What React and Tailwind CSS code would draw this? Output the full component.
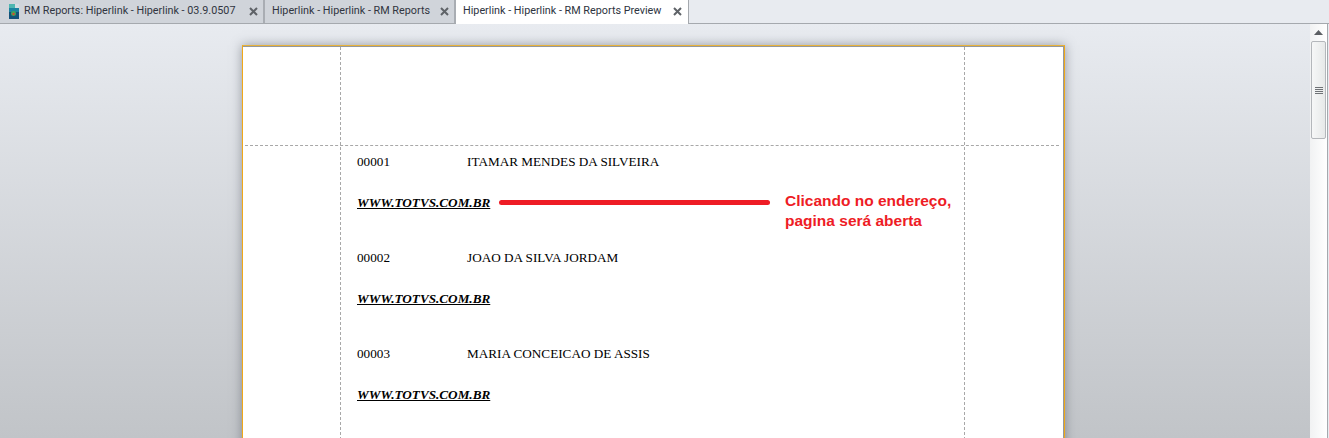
const SERIF = "font-['Liberation_Serif',serif]";

const RECORDS = [
  { code: "00001", name: "ITAMAR MENDES DA SILVEIRA" },
  { code: "00002", name: "JOAO DA SILVA JORDAM" },
  { code: "00003", name: "MARIA CONCEICAO DE ASSIS" },
];

function CloseIcon() {
  return (
    <svg width="9" height="9" viewBox="0 0 9 9" className="shrink-0">
      <path d="M1 1l7 7M8 1L1 8" stroke="#5f6368" strokeWidth="2" />
    </svg>
  );
}

function ReportIcon() {
  return (
    <svg width="10" height="15" viewBox="0 0 10 15" className="shrink-0">
      <rect x="0" y="0" width="10" height="15" fill="#12527a" />
      <rect x="0" y="0" width="6" height="4" fill="#4fb6b0" />
      <path d="M6 0h4v4H6z" fill="#d5dde2" />
      <rect x="0" y="4" width="10" height="4" fill="#1a83a0" />
      <circle cx="4.5" cy="9.5" r="2.5" fill="#3fa65a" />
      <circle cx="4.5" cy="10" r="1.2" fill="#d5482f" />
    </svg>
  );
}

function Tab({ label, icon, active, className }) {
  return (
    <div
      className={`flex items-center shrink-0 ${className} ${
        active
          ? "h-6 pb-[2px] bg-white border-r border-[#a5a9ae] text-[#2d3340]"
          : "h-[23px] bg-[#d0d4da] border-r-2 border-[#a9adb3] text-[#30353f]"
      }`}
    >
      {icon}
      <span className="flex-1 whitespace-nowrap font-['Roboto',sans-serif] text-[10.8px] leading-none">{label}</span>
      <CloseIcon />
    </div>
  );
}

function Scrollbar() {
  return (
    <div className="w-[17px] shrink-0 flex flex-col items-center bg-gradient-to-r from-[#f1f2f3] to-white pt-[6px]">
      <svg width="9" height="5" viewBox="0 0 9 5">
        <path d="M4.5 0L9 5H0z" fill="#5c5f63" />
      </svg>
      <div className="mt-[6px] w-[15px] h-[98px] rounded-[2px] border border-[#b4b7bb] bg-gradient-to-r from-[#f6f7f7] to-[#e7e9e9] flex flex-col items-center justify-center gap-px">
        <span className="w-2 h-px bg-[#6f7276]" />
        <span className="w-2 h-px bg-[#6f7276]" />
        <span className="w-2 h-px bg-[#6f7276]" />
        <span className="w-2 h-px bg-[#6f7276]" />
      </div>
    </div>
  );
}

export default function App() {
  return (
    <div className="w-[1329px] h-[438px] overflow-hidden flex flex-col bg-[#e8ebf0] font-['Liberation_Sans',sans-serif]">
      <div className="h-6 shrink-0 flex items-start border-b border-[#a5a9ae]">
        <Tab
          className="w-[265px] pl-[9px] pr-[5px] gap-[5px]"
          icon={<ReportIcon />}
          label="RM Reports: Hiperlink - Hiperlink - 03.9.0507"
        />
        <Tab className="w-[191px] pl-[7px] pr-[5px]" label="Hiperlink - Hiperlink - RM Reports" />
        <Tab active className="w-[233px] pl-[7px] pr-[6px]" label="Hiperlink - Hiperlink - RM Reports Preview" />
      </div>

      <div className="flex-1 min-h-0 flex border-r border-[#a5a9ae] mr-px">
        <div className="flex-1 min-w-0 overflow-hidden bg-gradient-to-b from-[#e8ebf0] to-[#c1c4c8] pt-[21px] pl-[242px] pr-[245px]">
          <div className="relative h-[500px] bg-white border-t border-t-[#e8b23a] border-l border-l-[#f0a818] border-r border-r-[#f0a818] shadow-[inset_0_1px_0_#94989d,inset_-1px_0_0_#94989d,0_0_10px_rgba(70,75,85,0.5)]">
            <div className="absolute left-[97px] top-[1px] bottom-0 border-l border-dashed border-[#a8a8a8]" />
            <div className="absolute left-[721px] top-[1px] bottom-0 border-l border-dashed border-[#a8a8a8]" />

            <div className="h-[100px] ml-[2px] mr-[5px] border-b border-dashed border-[#a8a8a8]" />

            <div className={`pl-[114px] pt-[6px] ${SERIF} text-[13.2px] leading-[20px] text-black`}>
              {RECORDS.map((record, index) => (
                <div key={record.code} className="h-[96px] relative">
                  <div className="flex">
                    <span className="w-[110px]">{record.code}</span>
                    <span>{record.name}</span>
                  </div>
                  <div className="mt-[21px] font-bold italic underline">WWW.TOTVS.COM.BR</div>
                  {index === 0 && (
                    <>
                      <span className="absolute left-[142px] top-[48px] w-[271px] h-[5px] rounded-full bg-[#ee1c25]" />
                      <div className="absolute left-[428px] top-[39px] font-['Liberation_Sans',sans-serif] text-[15.5px] leading-[20px] font-bold text-[#ee1c25] whitespace-nowrap">
                        <div>Clicando no endereço,</div>
                        <div>pagina será aberta</div>
                      </div>
                    </>
                  )}
                </div>
              ))}
            </div>
          </div>
        </div>
        <Scrollbar />
      </div>
    </div>
  );
}
